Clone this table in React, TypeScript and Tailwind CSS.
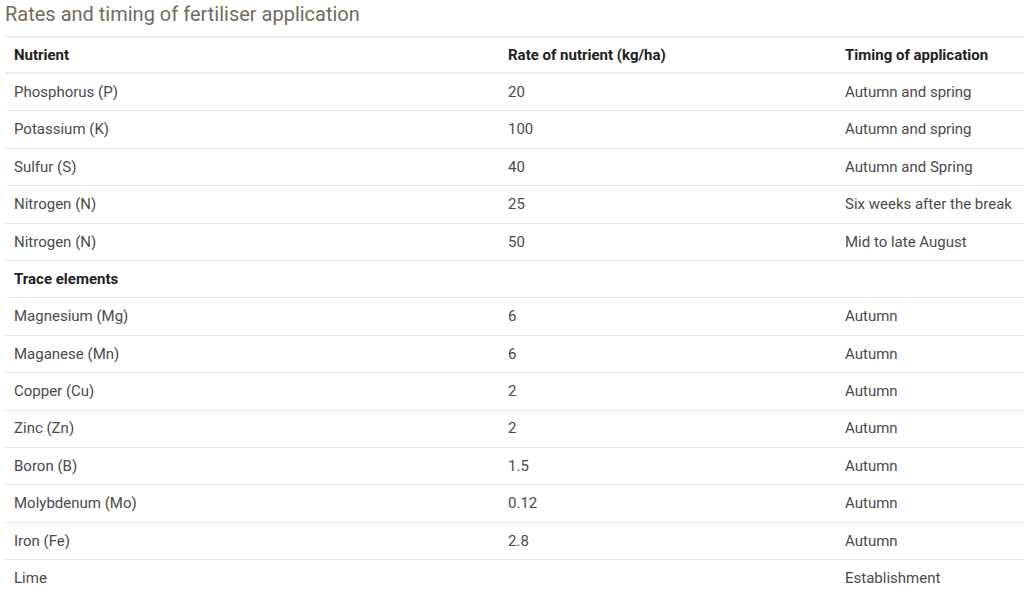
const rows: { name: string; rate: string; timing: string; bold?: boolean }[] = [
  { name: 'Phosphorus (P)', rate: '20', timing: 'Autumn and spring' },
  { name: 'Potassium (K)', rate: '100', timing: 'Autumn and spring' },
  { name: 'Sulfur (S)', rate: '40', timing: 'Autumn and Spring' },
  { name: 'Nitrogen (N)', rate: '25', timing: 'Six weeks after the break' },
  { name: 'Nitrogen (N)', rate: '50', timing: 'Mid to late August' },
  { name: 'Trace elements', rate: '', timing: '', bold: true },
  { name: 'Magnesium (Mg)', rate: '6', timing: 'Autumn' },
  { name: 'Maganese (Mn)', rate: '6', timing: 'Autumn' },
  { name: 'Copper (Cu)', rate: '2', timing: 'Autumn' },
  { name: 'Zinc (Zn)', rate: '2', timing: 'Autumn' },
  { name: 'Boron (B)', rate: '1.5', timing: 'Autumn' },
  { name: 'Molybdenum (Mo)', rate: '0.12', timing: 'Autumn' },
  { name: 'Iron (Fe)', rate: '2.8', timing: 'Autumn' },
  { name: 'Lime', rate: '', timing: 'Establishment' },
]

export default function App() {
  return (
    <div className="w-[1024px] h-[592px] overflow-hidden bg-white font-['Roboto',sans-serif]">
      <h2 className="pl-[5px] h-[28px] mb-[8px] flex items-center text-[20px] leading-none text-[#736a5e]">
        Rates and timing of fertiliser application
      </h2>
      <div className="ml-[5px] border-t-2 border-[#ececec]">
        <div className="grid grid-cols-[494px_337px_1fr] h-[36px] items-center border-b-2 border-[#ececec] text-[15px] font-bold text-[#222]">
          <div className="pl-[9px]">Nutrient</div>
          <div className="pl-[9px]">Rate of nutrient (kg/ha)</div>
          <div className="pl-[9px]">Timing of application</div>
        </div>
        {rows.map((row, i) => (
          <div
            key={i}
            className="grid grid-cols-[494px_337px_1fr] h-[37.4px] items-center border-b border-[#e6e6e6] text-[15px] text-[#4a4a4a]"
          >
            <div className={row.bold ? 'pl-[9px] font-bold text-[#222]' : 'pl-[9px]'}>{row.name}</div>
            <div className="pl-[9px]">{row.rate}</div>
            <div className="pl-[9px] whitespace-nowrap">{row.timing}</div>
          </div>
        ))}
      </div>
    </div>
  )
}
